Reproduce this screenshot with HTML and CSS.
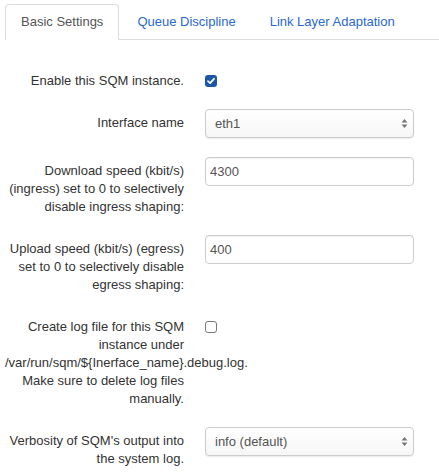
FILE: index.html
```
<!DOCTYPE html>
<html lang="en">
<head>
    <meta charset="UTF-8">
    <meta name="viewport" content="width=device-width, initial-scale=1.0">
    <title>SQM - Basic Settings</title>
    <link rel="stylesheet" href="styles.css">
</head>
<body>
    <ul class="tabs">
        <li class="tab active"><a href="#">Basic Settings</a></li>
        <li class="tab"><a href="#">Queue Discipline</a></li>
        <li class="tab"><a href="#">Link Layer Adaptation</a></li>
    </ul>

    <div class="form">
        <div class="row">
            <label class="label">Enable this SQM instance.</label>
            <div class="field">
                <span class="check on">
                    <svg width="12" height="12" viewBox="0 0 12 12">
                        <path d="M3 6.2 L5.1 8.2 L9 3.8" fill="none" stroke="#fff" stroke-width="1.8" stroke-linecap="round" stroke-linejoin="round"/>
                    </svg>
                </span>
            </div>
        </div>

        <div class="row">
            <label class="label">Interface name</label>
            <div class="field">
                <div class="select">
                    <span>eth1</span>
                    <svg class="arrows" width="7" height="11" viewBox="0 0 7 11">
                        <path d="M3.5 1 L6.5 4.5 L0.5 4.5 Z M3.5 10 L6.5 6.5 L0.5 6.5 Z" fill="#777"/>
                    </svg>
                </div>
            </div>
        </div>

        <div class="row">
            <label class="label">Download speed (kbit/s) (ingress) set to 0 to selectively disable ingress shaping:</label>
            <div class="field">
                <div class="input">4300</div>
            </div>
        </div>

        <div class="row">
            <label class="label">Upload speed (kbit/s) (egress) set to 0 to selectively disable egress shaping:</label>
            <div class="field">
                <div class="input">400</div>
            </div>
        </div>

        <div class="row">
            <label class="label">Create log file for this SQM instance under /var/run/sqm/${Inerface_name}.debug.log. Make sure to delete log files manually.</label>
            <div class="field">
                <span class="check"></span>
            </div>
        </div>

        <div class="row">
            <label class="label">Verbosity of SQM's output into the system log.</label>
            <div class="field">
                <div class="select">
                    <span>info (default)</span>
                    <svg class="arrows" width="7" height="11" viewBox="0 0 7 11">
                        <path d="M3.5 1 L6.5 4.5 L0.5 4.5 Z M3.5 10 L6.5 6.5 L0.5 6.5 Z" fill="#777"/>
                    </svg>
                </div>
            </div>
        </div>
    </div>
</body>
</html>
```

FILE: styles.css
```
* {
    margin: 0;
    padding: 0;
    box-sizing: border-box;
}

body {
    font-family: "Liberation Sans", Arial, sans-serif;
    font-size: 13px;
    line-height: 18px;
    color: #333;
    background: #fff;
    padding: 4px 0 0 5px;
}

.tabs {
    list-style: none;
    display: flex;
    border-bottom: 1px solid #ddd;
}

.tab {
    margin-right: 2px;
    margin-bottom: -1px;
}

.tab a {
    display: block;
    padding: 8px 15px;
    border: 1px solid transparent;
    border-radius: 4px 4px 0 0;
    color: #2a68d0;
    text-decoration: none;
}

.tab.active a {
    color: #555;
    background: #fff;
    border-color: #ddd #ddd transparent;
}

.form {
    padding-top: 27px;
}

.row {
    display: grid;
    grid-template-columns: 179px 209px;
    column-gap: 21px;
    margin-bottom: 19px;
}

.label {
    text-align: right;
    padding-top: 5px;
}

.field {
    display: flex;
    align-items: flex-start;
}

.check {
    display: block;
    width: 12px;
    height: 12px;
    margin-top: 8px;
    border: 1px solid #777;
    border-radius: 3px;
    background: #fff;
}

.check.on {
    border: none;
    background: #1c56a6;
}

.check svg {
    display: block;
}

.select,
.input {
    position: relative;
    width: 209px;
    height: 29px;
    border: 1px solid #ccc;
    border-radius: 4px;
    color: #555;
    line-height: 27px;
    box-shadow: inset 0 1px 1px rgba(0, 0, 0, 0.06);
}

.input {
    padding-left: 4px;
}

.select {
    padding-left: 9px;
    background: linear-gradient(#fff, #f6f6f6);
    box-shadow: 0 1px 1px rgba(0, 0, 0, 0.08);
}

.select .arrows {
    position: absolute;
    right: 5px;
    top: 8px;
}
```
